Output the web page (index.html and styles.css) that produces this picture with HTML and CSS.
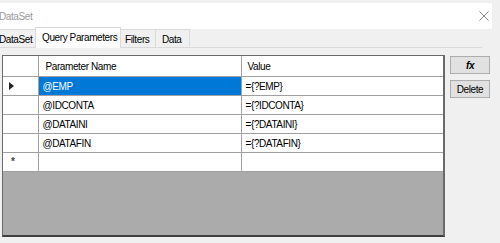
FILE: index.html
```html
<!DOCTYPE html>
<html lang="en">
<head>
    <meta charset="UTF-8">
    <title>DataSet</title>
    <link rel="stylesheet" href="styles.css">
</head>
<body>
    <div class="titlebar">
        <span class="title">DataSet</span>
        <svg class="close" width="10" height="10" viewBox="0 0 10 10">
            <path d="M0.5 0.5 L9.5 9.5 M9.5 0.5 L0.5 9.5" stroke="#8a8a8a" stroke-width="1" fill="none"/>
        </svg>
    </div>

    <div class="tabs">
        <div class="tab first">DataSet</div>
        <div class="tab active">Query Parameters</div>
        <div class="tab filters">Filters</div>
        <div class="tab data">Data</div>
    </div>

    <div class="page">
        <div class="grid">
            <table class="params">
                <colgroup>
                    <col class="c-head">
                    <col class="c-name">
                    <col>
                </colgroup>
                <tr class="header">
                    <td></td>
                    <td>Parameter Name</td>
                    <td>Value</td>
                </tr>
                <tr>
                    <td class="rowhead">
                        <svg width="5" height="8" viewBox="0 0 5 8"><path d="M0 0 L5 4 L0 8 Z" fill="#222"/></svg>
                    </td>
                    <td class="selected">@EMP</td>
                    <td>={?EMP}</td>
                </tr>
                <tr>
                    <td class="rowhead"></td>
                    <td>@IDCONTA</td>
                    <td>={?IDCONTA}</td>
                </tr>
                <tr>
                    <td class="rowhead"></td>
                    <td>@DATAINI</td>
                    <td>={?DATAINI}</td>
                </tr>
                <tr>
                    <td class="rowhead"></td>
                    <td>@DATAFIN</td>
                    <td>={?DATAFIN}</td>
                </tr>
                <tr>
                    <td class="rowhead newrow">*</td>
                    <td></td>
                    <td></td>
                </tr>
            </table>
        </div>
        <div class="side">
            <button class="btn fx">fx</button>
            <button class="btn">Delete</button>
        </div>
    </div>
</body>
</html>
```

FILE: styles.css
```css
body {
    margin: 0;
    background: #f0f0f0;
    font-family: "Liberation Sans", Arial, sans-serif;
    font-size: 10px;
    letter-spacing: -0.4px;
    color: #000;
    overflow: hidden;
}
.titlebar {
    margin-top: 3px;
    width: 492px;
    height: 26px;
    background: #fff;
    display: flex;
    justify-content: space-between;
    align-items: center;
}
.title {
    color: #9a9a9a;
    margin-left: -1px;
}
.close {
    margin-right: 3px;
}
.tabs {
    display: flex;
    align-items: flex-end;
    width: 482px;
    height: 19px;
    border-bottom: 1px solid #dadada;
    box-sizing: border-box;
}
.tab {
    height: 18px;
    line-height: 19px;
    padding-left: 5px;
    background: #f0f0f0;
    border: 1px solid #dadada;
    border-bottom: none;
    margin-right: -1px;
    box-sizing: border-box;
    white-space: nowrap;
    overflow: hidden;
}
.tab.first {
    width: 37px;
    padding-left: 0;
    border-left: none;
    margin-left: -1px;
}
.tab.active {
    width: 86px;
    height: 21px;
    line-height: 19px;
    padding-left: 6px;
    margin-bottom: -1px;
    background: #fff;
    position: relative;
    z-index: 1;
}
.tab.filters {
    width: 36px;
    padding-left: 4px;
}
.tab.data {
    width: 35px;
    padding-left: 6px;
}
.page {
    display: flex;
    align-items: flex-start;
    margin: 7px 0 0 2px;
}
.grid {
    width: 440px;
    height: 179px;
    background: #ababab;
    border: 1px solid #6a6a6a;
    border-right: 2px solid #6a6a6a;
    border-bottom: 2px solid #3e3e3e;
}
.params {
    width: 100%;
    border-collapse: collapse;
    table-layout: fixed;
    background: #fff;
}
.c-head {
    width: 35px;
}
.c-name {
    width: 203px;
}
.params td {
    height: 18px;
    padding: 0 0 0 4px;
    border-right: 1px solid #a0a0a0;
    border-bottom: 1px solid #a0a0a0;
    white-space: nowrap;
    vertical-align: middle;
}
.params td:last-child {
    border-right: none;
}
.params .header td {
    height: 20px;
    padding-left: 7px;
}
.params .header td:last-child {
    padding-left: 6px;
}
.params .rowhead {
    padding-left: 6px;
    line-height: 0;
}
.params .newrow {
    line-height: 18px;
    font-weight: bold;
    color: #444;
    padding-left: 8px;
}
.params .selected {
    background: #0078d7;
    color: #fff;
}
.side {
    display: flex;
    flex-direction: column;
    gap: 6px;
    margin-left: 5px;
    margin-top: 1px;
}
.btn {
    width: 40px;
    height: 18px;
    padding: 0;
    background: #e1e1e1;
    border: 1px solid #adadad;
    font-family: inherit;
    font-size: 10px;
    letter-spacing: -0.4px;
    color: #000;
}
.fx {
    font-style: italic;
    font-weight: bold;
}
```
